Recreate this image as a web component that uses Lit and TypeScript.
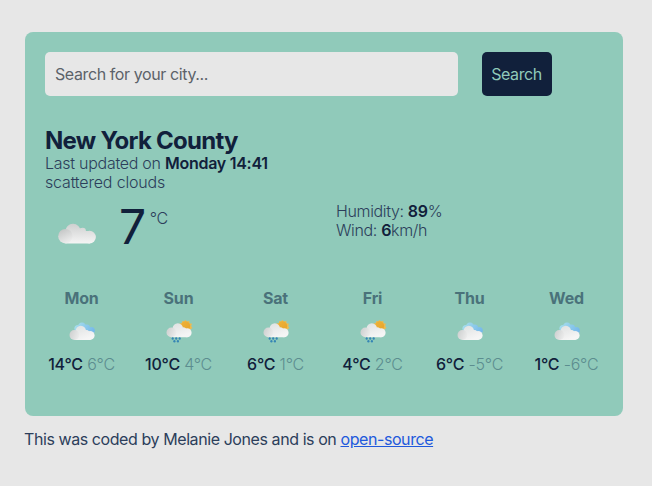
import { LitElement, html, css, svg, nothing } from "lit";
import { customElement, property } from "lit/decorators.js";

type Kind = "cloud" | "few" | "rain";

interface Day {
  name: string;
  kind: Kind;
  max: number;
  min: number;
}

@customElement("weather-icon")
class WeatherIcon extends LitElement {
  @property() kind: Kind = "cloud";

  static styles = css`
    :host { display: block; line-height: 0; }
    svg { display: block; width: 100%; height: 100%; overflow: visible; }
  `;

  private blueCloud() {
    return svg`
      <g fill="url(#blue)">
        <circle cx="9" cy="9.500" r="3.600"/>
        <circle cx="13" cy="8" r="4.400"/>
        <circle cx="17.800" cy="8.800" r="3.200"/>
        <circle cx="22.300" cy="11.600" r="3.500"/>
        <path d="M9 9h10l3 2v5H9z"/>
      </g>`;
  }

  private sun() {
    return svg`
      <path fill="#eebb4e" d="M19.300 .8l1.500 1.900 2.500-.9.200 2.500 2.500.5-.9 2.300 1.400 1.900-2.100 1.200.2 2.400H14l-.6-8.200 2.300-.2.700-2.200 1.900.4z"/>
      <circle cx="19.500" cy="7" r="4.700" fill="url(#sun)"/>`;
  }

  private drops() {
    return svg`
      <g fill="#3585b5">
        ${[[6.7, 19.5], [10.2, 19.5], [13.7, 19.5], [8.4, 22.2], [11.9, 22.2]].map(
          ([x, y]) => svg`<ellipse cx=${x} cy=${y} rx="1.100" ry="1.200"/>`
        )}
      </g>`;
  }

  private smallCloud() {
    return svg`
      <g transform=${this.kind === "rain" ? "translate(0 0)" : "translate(0 2.600)"}>
        <g fill="url(#white)">
          <circle cx="11.800" cy="9.400" r="5.200"/>
          <circle cx="17.300" cy="11.200" r="2.900"/>
          <circle cx="21.100" cy="13.800" r="4.500"/>
          <path d="M5.400 18.300V11l4-2h9l3 2v7.300z"/>
        </g>
        <circle cx="5.400" cy="13.400" r="4.900" fill="url(#puff)"/>
      </g>`;
  }

  render() {
    const defs = svg`
      <defs>
        <linearGradient id="white" gradientUnits="userSpaceOnUse" x1="9" y1="4" x2="14" y2="18">
          <stop offset="0" stop-color="#e0e2e2"/><stop offset="1" stop-color="#f5f5f5"/>
        </linearGradient>
        <linearGradient id="puff" x1="0" y1=".3" x2="1" y2=".7">
          <stop offset="0" stop-color="#ced0d0"/><stop offset="1" stop-color="#ededed"/>
        </linearGradient>
        <linearGradient id="blue" gradientUnits="userSpaceOnUse" x1="8" y1="4" x2="25" y2="13">
          <stop offset="0" stop-color="#a4dcec"/><stop offset="1" stop-color="#74b7ea"/>
        </linearGradient>
        <linearGradient id="sun" x1="0" y1="0" x2="1" y2="1">
          <stop offset="0" stop-color="#efb238"/><stop offset="1" stop-color="#e5a42c"/>
        </linearGradient>
        <linearGradient id="big" gradientUnits="userSpaceOnUse" x1="0" y1="1" x2="0" y2="20">
          <stop offset="0" stop-color="#cfd0d0"/><stop offset="1" stop-color="#f4f4f4"/>
        </linearGradient>
        <linearGradient id="bigpuff" x1="0" y1="0" x2=".5" y2="1">
          <stop offset="0" stop-color="#bfc1c1"/><stop offset="1" stop-color="#ececec"/>
        </linearGradient>
      </defs>`;
    if (this.kind === "cloud") {
      return html`<svg viewBox="0 0 38 21">${defs}
        <g fill="url(#big)">
          <circle cx="15" cy="8.300" r="7.600"/>
          <circle cx="24.700" cy="8" r="3.200"/>
          <circle cx="31.600" cy="14.100" r="6.300"/>
          <path d="M7.500 20.400V9L24 5l3.500 3h4.300v12.400z"/>
        </g>
        <circle cx="7.400" cy="13.200" r="7.200" fill="url(#bigpuff)"/>
      </svg>`;
    }
    return html`<svg viewBox="0 0 26 24">${defs}
      ${this.kind === "few" ? this.blueCloud() : nothing}
      ${this.kind === "rain" ? this.sun() : nothing}
      ${this.smallCloud()}
      ${this.kind === "rain" ? this.drops() : nothing}
    </svg>`;
  }
}

@customElement("app-root")
class AppRoot extends LitElement {
  private days: Day[] = [
    { name: "Mon", kind: "few", max: 14, min: 6 },
    { name: "Sun", kind: "rain", max: 10, min: 4 },
    { name: "Sat", kind: "rain", max: 6, min: 1 },
    { name: "Fri", kind: "rain", max: 4, min: 2 },
    { name: "Thu", kind: "few", max: 6, min: -5 },
    { name: "Wed", kind: "few", max: 1, min: -6 },
  ];

  static styles = css`
    :host {
      display: block;
      box-sizing: border-box;
      height: 486px;
      padding: 32px 29px 0 25px;
      background: #e7e7e7;
      color: #2c3e5b;
      font: 400 16px/19px Inter, "Liberation Sans", sans-serif;
      letter-spacing: -0.35px;
    }
    * { box-sizing: border-box; }
    .card {
      height: 384px;
      padding: 20px;
      border-radius: 8px;
      background: #90caba;
    }
    .search { display: flex; gap: 24px; height: 44px; }
    .field, .submit {
      height: 44px;
      border: 0;
      border-radius: 5px;
      font: inherit;
      letter-spacing: -0.4px;
    }
    .field {
      width: 413px;
      padding: 0 10px;
      background: #e7e7e7;
      outline: none;
    }
    .field::placeholder { color: #5c6269; opacity: 1; }
    .submit { width: 70px; padding: 0 1px 0 0; background: #11203b; color: #90caba; }
    .place { margin-top: 32px; font-weight: 300; }
    .city {
      margin: 0 0 1px;
      font-size: 24px;
      font-weight: 700;
      line-height: 25px;
      letter-spacing: -0.74px;
      color: #11203b;
    }
    .updated { letter-spacing: -0.27px; }
    .sky { letter-spacing: -0.17px; }
    strong { font-weight: 600; color: #11203b; }
    .now { display: grid; grid-template-columns: 291px 1fr; height: 82px; margin-top: 10px; }
    .reading { display: flex; align-items: flex-start; }
    .current { width: 38px; height: 21px; margin: 21px 0 0 13px; }
    .temp {
      margin-left: 23px;
      font-size: 48px;
      font-weight: 400;
      line-height: 50px;
      color: #11203b;
    }
    .unit { margin: 7px 0 0 4px; font-weight: 300; }
    .facts { font-weight: 300; }
    .forecast {
      display: grid;
      grid-template-columns: repeat(6, 97px);
      margin: 5px -12px 0;
      text-align: center;
    }
    .day { display: flex; flex-direction: column; align-items: center; }
    .name { font-weight: 750; letter-spacing: -0.2px; color: #4a727a; }
    .small { width: 26px; height: 24px; margin: 11px 0 12px; }
    .max { color: #11203b; font-weight: 450; }
    .min { color: #5c8d8f; font-weight: 300; }
    .range { letter-spacing: -0.22px; }
    .footer { margin: 14px 0 0 -1px; letter-spacing: -0.42px; }
    .link { color: #2159dc; }
  `;

  render() {
    return html`
      <main class="card">
        <form class="search">
          <input class="field" placeholder="Search for your city..." />
          <button class="submit" type="button">Search</button>
        </form>
        <section class="place">
          <h1 class="city">New York County</h1>
          <div class="updated">Last updated on <strong>Monday 14:41</strong></div>
          <div class="sky">scattered clouds</div>
        </section>
        <section class="now">
          <div class="reading">
            <weather-icon class="current" kind="cloud"></weather-icon>
            <span class="temp">7</span><span class="unit">°C</span>
          </div>
          <div class="facts">
            <div>Humidity: <strong>89</strong>%</div>
            <div>Wind: <strong>6</strong>km/h</div>
          </div>
        </section>
        <section class="forecast">
          ${this.days.map(
            (d) => html`<div class="day">
              <div class="name">${d.name}</div>
              <weather-icon class="small" kind=${d.kind}></weather-icon>
              <div class="range"><span class="max">${d.max}°C</span> <span class="min">${d.min}°C</span></div>
            </div>`
          )}
        </section>
      </main>
      <footer class="footer">
        This was coded by Melanie Jones and is on <a class="link" href="#">open-source</a>
      </footer>
    `;
  }
}
